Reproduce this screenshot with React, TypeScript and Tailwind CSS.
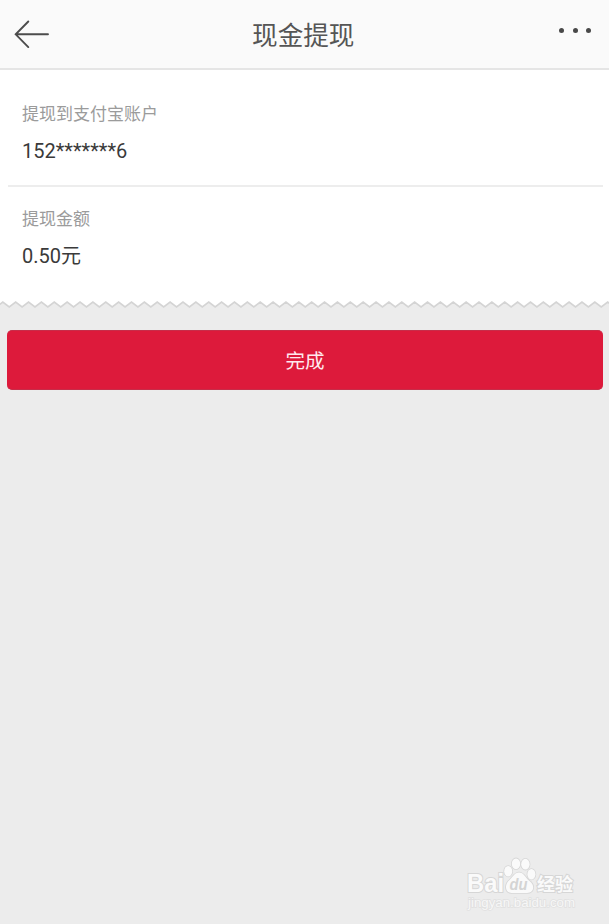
import React from 'react';

interface Field {
  label: string;
  value: string;
}

const ACCOUNT: Field = { label: '提现到支付宝账户', value: '152*******6' };
const AMOUNT: Field = { label: '提现金额', value: '0.50元' };

// Torn paper edge: one tooth every TOOTH px
const TOOTH = 12.87;
const EDGE_POINTS = Array.from({ length: 98 }, (_, i) => {
  const x = 2.8 + (i - 1) * (TOOTH / 2);
  return `${x.toFixed(2)},${i % 2 === 1 ? 2 : 7}`;
}).join(' ');

const Header: React.FC = () => (
  <header className="flex h-[70px] items-center justify-between border-b-2 border-[#e5e5e5] bg-[#fafafa] pl-3.5 pr-[17.5px]">
    <button type="button" aria-label="返回" className="w-9">
      <svg width="36" height="30" viewBox="0 0 36 30" fill="none" stroke="#4c4c4c" strokeWidth="1.9" strokeLinecap="round">
        <path d="M34 15.3H2M14.3 2.5L1.7 15.3L14.3 28.1" />
      </svg>
    </button>
    <h1 className="pr-[3px] pt-[3px] text-[25.6px] leading-[38px] text-[#555]">现金提现</h1>
    <button type="button" aria-label="更多" className="flex w-8 justify-between pb-[7px]">
      <span className="size-[5px] rounded-full bg-[#484848]" />
      <span className="size-[5px] rounded-full bg-[#484848]" />
      <span className="size-[5px] rounded-full bg-[#484848]" />
    </button>
  </header>
);

const InfoRow: React.FC<{ field: Field }> = ({ field }) => (
  <div>
    <p className="text-[17px] leading-6 text-[#9b9b9b]">{field.label}</p>
    <p className="mt-[11px] text-[20px] leading-7 text-[#3a3a3a]">{field.value}</p>
  </div>
);

const TornEdge: React.FC = () => (
  <svg className="block h-2.5 w-full" viewBox="0 0 609 10" preserveAspectRatio="none">
    <rect width="609" height="10" fill="#ececec" />
    <polygon points={`-10,-1 ${EDGE_POINTS} 625,-1`} fill="#fff" />
    <polyline points={EDGE_POINTS} fill="none" stroke="#d4d4d4" strokeWidth="1.6" />
  </svg>
);

const Watermark: React.FC = () => (
  <svg
    className="absolute bottom-[10px] right-[31px]"
    width="112"
    height="58"
    viewBox="0 0 112 58"
    fill="#fafafa"
    stroke="#d6d6d6"
    strokeWidth="1.6"
    paintOrder="stroke"
  >
    <g fontFamily="Liberation Sans, sans-serif" fontWeight="bold">
      <text x="1" y="36" fontSize="25" textLength="37" lengthAdjust="spacingAndGlyphs" strokeWidth="2">Bai</text>
      <ellipse cx="42.2" cy="15.2" rx="4" ry="5.2" />
      <ellipse cx="50" cy="7.8" rx="4.2" ry="5.4" />
      <ellipse cx="59.4" cy="8.2" rx="4.2" ry="5.4" />
      <ellipse cx="65.4" cy="18.2" rx="4" ry="5.2" />
      <path d="M53 16.5C48.5 16.5 47 21 43.5 24C38.5 28 38.5 36.5 45.5 37H61C68.5 36.5 69 29 63.5 25C59 21.5 58 16.5 53 16.5Z" />
      <text x="43.5" y="34.3" fontSize="17" fontStyle="italic" textLength="18" lengthAdjust="spacingAndGlyphs" fill="#d4d4d4" stroke="none">du</text>
    </g>
    <text x="71" y="34.5" fontFamily="Noto Sans CJK SC, sans-serif" fontWeight="bold" fontSize="18" strokeWidth="2">经验</text>
    <text x="2" y="51" fontFamily="Liberation Sans, sans-serif" fontSize="12" textLength="107" lengthAdjust="spacingAndGlyphs" fill="#f7f7f7" stroke="#e0e0e0" strokeWidth="1.4">
      jingyan.baidu.com
    </text>
  </svg>
);

const App: React.FC = () => {
  return (
    <div className="relative h-[924px] w-full overflow-hidden bg-[#ececec] font-[Roboto,'Noto_Sans_CJK_SC',sans-serif]">
      <Header />
      <main>
        <section className="h-[230px] bg-white pl-2 pr-1.5">
          <div className="h-[117px] border-b-2 border-[#ededed] pl-3.5 pt-8">
            <InfoRow field={ACCOUNT} />
          </div>
          <div className="pl-3.5 pt-5">
            <InfoRow field={AMOUNT} />
          </div>
        </section>
        <TornEdge />
        <div className="px-[7px] pt-5">
          <button
            type="button"
            className="h-[60px] w-[596px] rounded-[5px] border-y border-[#c72d49] bg-[#dd1a3b] pt-[3px] text-[19.5px] text-[#ffe9ee]"
          >
            完成
          </button>
        </div>
      </main>
      <Watermark />
    </div>
  );
};

export default App;
